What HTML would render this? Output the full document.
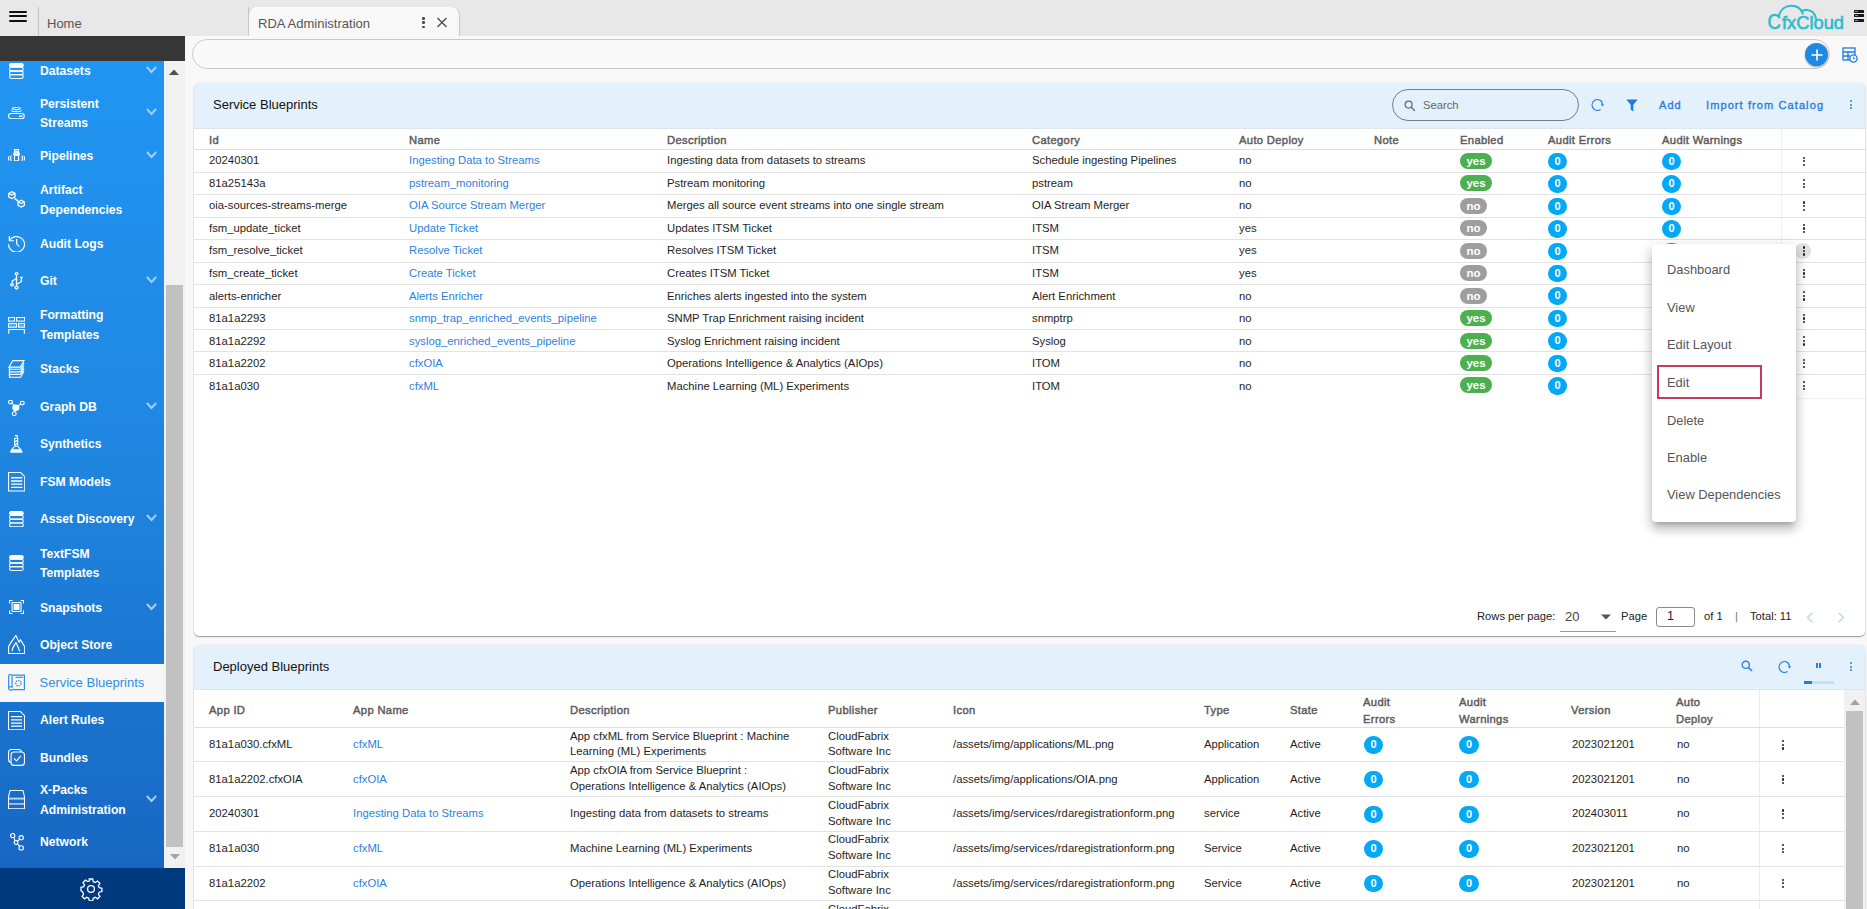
<!DOCTYPE html><html><head><meta charset="utf-8"><style>
*{box-sizing:border-box;margin:0;padding:0}
html,body{width:1867px;height:909px;overflow:hidden;background:#f8f8f8;font-family:"Liberation Sans",sans-serif;position:relative}
.abs{position:absolute}
.t{position:absolute;white-space:nowrap;line-height:1}
.top{left:0;top:0;width:1867px;height:36px;background:#e8e8e8}
.side{left:0;top:61px;width:164px;height:807px;background:linear-gradient(180deg,#2195f2 0%,#1f86e0 50%,#1767c2 100%)}
.si{position:absolute;left:0;width:164px;color:#fff;font-weight:bold;font-size:13px;}
.si .lb{position:absolute;left:39.5px;top:0.6px!important;line-height:19.2px;font-size:13.5px;transform:scaleX(0.9);transform-origin:0 0}
.si svg{position:absolute}
.chev{position:absolute;left:146px;width:12px;height:8px}
.card{position:absolute;background:#fff;border-radius:5px;box-shadow:0 1px 1.2px rgba(0,0,0,0.38),0 0 2px rgba(0,0,0,0.08)}
.ch{position:absolute;left:0;top:0;right:0;background:#e3f1fc;border-radius:5px 5px 0 0;border-bottom:1px solid #dce6ee}
.hl{position:absolute;height:1px;background:#e3e3e3}
.th{position:absolute;white-space:nowrap;line-height:1;font-size:11.2px;font-weight:normal;letter-spacing:0.35px;-webkit-text-stroke:0.45px #5c5c5c;color:#5c5c5c}
.td{position:absolute;white-space:nowrap;line-height:1;font-size:11.3px;color:#1e1e1e}
.lk{color:#2f7fe0}
.pill{position:absolute;height:16px;border-radius:8px;color:#fff;font-weight:bold;font-size:11.5px;line-height:16px;text-align:center}
.badge{position:absolute;width:19px;height:17.5px;border-radius:9px;background:#03a9f4;color:#fff;font-weight:bold;font-size:11px;line-height:17px;text-align:center}
.dots{position:absolute;width:4px;height:10px}
.dots i{position:absolute;left:0.7px;width:2.3px;height:2.3px;background:#222;border-radius:50%}
.dots i:nth-child(1){top:0}.dots i:nth-child(2){top:3.6px}.dots i:nth-child(3){top:7.2px}
.mi{position:absolute;left:1667px;font-size:12.9px;color:#555;line-height:1;white-space:nowrap}
</style></head><body>
<div class="abs top"></div>
<div class="abs" style="left:9px;top:10.5px;width:18px;height:2.2px;background:#111;border-radius:1px"></div>
<div class="abs" style="left:9px;top:15.3px;width:18px;height:2.2px;background:#111;border-radius:1px"></div>
<div class="abs" style="left:9px;top:20.1px;width:18px;height:2.2px;background:#111;border-radius:1px"></div>
<div class="abs" style="left:38px;top:7px;width:1px;height:29px;background:#c4c4c4"></div>
<div class="t" style="left:47px;top:17px;font-size:13px;color:#555">Home</div>
<div class="abs" style="left:248px;top:7px;width:1px;height:29px;background:#c4c4c4"></div>
<div class="abs" style="left:248px;top:7px;width:212px;height:29px;background:#f8f8f8;border-radius:8px 8px 0 0;border-left:1px solid #c8c8c8;border-right:1.5px solid #c4c8cc"></div>
<div class="t" style="left:258px;top:17px;font-size:13px;color:#555">RDA Administration</div>
<div class="abs" style="left:422.2px;top:17px;width:2.7px;height:2.7px;border-radius:50%;background:#4a4a4a"></div><div class="abs" style="left:422.2px;top:21.3px;width:2.7px;height:2.7px;border-radius:50%;background:#4a4a4a"></div><div class="abs" style="left:422.2px;top:25.6px;width:2.7px;height:2.7px;border-radius:50%;background:#4a4a4a"></div>
<svg class="abs" style="left:436px;top:17px" width="12" height="11" viewBox="0 0 12 11"><path d="M1.5 1 L10.5 10 M10.5 1 L1.5 10" stroke="#4a4a4a" stroke-width="1.25"/></svg>
<svg class="abs" style="left:1760px;top:0px" width="90" height="34" viewBox="0 0 90 34">
<path d="M19.2 15.4 C20.5 9.3 25.5 5.8 31.5 5.8 C37 5.8 41 9 42.8 13.6" fill="none" stroke="#2bbdcf" stroke-width="2.1" stroke-linecap="round"/>
<path d="M41.6 11.4 C44 9.4 49.5 9.2 52.8 12.2 C54.8 14.2 55.8 16.4 56 19" fill="none" stroke="#2bbdcf" stroke-width="2.1" stroke-linecap="round"/>
<text x="7.6" y="29" font-family="Liberation Sans" font-size="21.5" fill="#2bbdcf" stroke="#2bbdcf" stroke-width="0.6" textLength="13.4" lengthAdjust="spacingAndGlyphs">C</text>
<text x="22" y="29" font-family="Liberation Sans" font-size="18" fill="#2bbdcf" stroke="#2bbdcf" stroke-width="0.6" textLength="62" lengthAdjust="spacingAndGlyphs">fxCloud</text>
</svg>
<div class="abs" style="left:1854px;top:10.2px;width:9.5px;height:3px;background:#1a1a1a;border-radius:0.5px"></div>
<div class="abs" style="left:1855px;top:11.2px;width:2.5px;height:1px;background:#6b8fd6"></div>
<div class="abs" style="left:1854px;top:14.4px;width:9.5px;height:3px;background:#1a1a1a;border-radius:0.5px"></div>
<div class="abs" style="left:1855px;top:15.4px;width:2.5px;height:1px;background:#6b8fd6"></div>
<div class="abs" style="left:1854px;top:18.6px;width:9.5px;height:3px;background:#1a1a1a;border-radius:0.5px"></div>
<div class="abs" style="left:1855px;top:19.6px;width:2.5px;height:1px;background:#6b8fd6"></div>
<div class="abs" style="left:0;top:36px;width:185px;height:25px;background:#363636"></div>
<div class="abs side"></div>
<div class="abs" style="left:164px;top:61px;width:21px;height:807px;background:#f1f1f1"></div>
<div class="abs" style="left:166px;top:285px;width:17px;height:561.5px;background:#c1c1c1"></div>
<svg class="abs" style="left:169px;top:69px" width="10" height="6"><path d="M0 6 L5 0.5 L10 6Z" fill="#505050"/></svg>
<svg class="abs" style="left:169.5px;top:854px" width="10" height="6"><path d="M0 0 L5 5.5 L10 0Z" fill="#a3a3a3"/></svg>
<div class="abs" style="left:0;top:664px;width:164px;height:37.5px;background:#f7f7f7"></div>
<div class="si" style="top:60.40px;height:19.2px;color:#fff;font-weight:bold"><div class="lb" style="">Datasets</div></div>
<div class="abs" style="left:9.10px;top:62.90px;line-height:0"><svg width="14.80" height="16.00" viewBox="0.45 0.25 15.10 16.50" preserveAspectRatio="none"><g fill="none" stroke="#fff" stroke-width="1.1"><rect x="1" y="0.8" width="14" height="3.6" rx="1.8" fill="#fff"/><rect x="1" y="4.6" width="14" height="3.8" rx="1.9"/><rect x="1" y="8.6" width="14" height="3.8" rx="1.9"/><rect x="1" y="12.4" width="14" height="3.8" rx="1.9"/></g></svg></div>
<svg class="abs" style="left:146px;top:65.8px" width="11" height="8" viewBox="0 0 11 8"><path d="M0.9 1 L5.5 6 L10.1 1" fill="none" stroke="#a6d0f8" stroke-width="1.9"/></svg>
<div class="si" style="top:93.30px;height:38.4px;color:#fff;font-weight:bold"><div class="lb" style="">Persistent<br>Streams</div></div>
<div class="abs" style="left:8.00px;top:106.90px;line-height:0"><svg width="16.80" height="12.30" viewBox="0.25 0.05 17.50 13.60" preserveAspectRatio="none"><g fill="none" stroke="#fff" stroke-width="1.1"><ellipse cx="9" cy="1.8" rx="4.3" ry="1.2"/><path d="M3.8 3.6c0 1 2.3 1.6 5.2 1.6s5.2-.6 5.2-1.6"/><rect x="0.8" y="7.3" width="16.4" height="5.8" rx="2.9"/><path d="M11.8 10.2h3.4" stroke-width="1.6"/></g></svg></div>
<svg class="abs" style="left:146px;top:108.3px" width="11" height="8" viewBox="0 0 11 8"><path d="M0.9 1 L5.5 6 L10.1 1" fill="none" stroke="#a6d0f8" stroke-width="1.9"/></svg>
<div class="si" style="top:145.40px;height:19.2px;color:#fff;font-weight:bold"><div class="lb" style="">Pipelines</div></div>
<div class="abs" style="left:7.90px;top:149.10px;line-height:0"><svg width="17.10" height="12.30" viewBox="0.30 0.05 16.60 12.70" preserveAspectRatio="none"><g fill="none" stroke="#fff" stroke-width="1.1" stroke-width="1.1"><rect x="6.6" y="0.6" width="4" height="1.8"/><path d="M5.9 5.6C5.9 3.8 7 3 8.6 3S11.3 3.8 11.3 5.6Z" fill="rgba(255,255,255,0.55)"/><rect x="6.6" y="6.6" width="4" height="5.6"/><path d="M1.4 7.4C0.7 8.8 0.7 10.6 1.4 12M3.6 6.8C2.7 8.5 2.7 10.9 3.6 12.4M13.6 6.8C14.5 8.5 14.5 10.9 13.6 12.4M15.8 7.4C16.5 8.8 16.5 10.6 15.8 12"/></g></svg></div>
<svg class="abs" style="left:146px;top:150.8px" width="11" height="8" viewBox="0 0 11 8"><path d="M0.9 1 L5.5 6 L10.1 1" fill="none" stroke="#a6d0f8" stroke-width="1.9"/></svg>
<div class="si" style="top:179.80px;height:38.4px;color:#fff;font-weight:bold"><div class="lb" style="">Artifact<br>Dependencies</div></div>
<div class="abs" style="left:7.90px;top:191.00px;line-height:0"><svg width="17.10" height="16.70" viewBox="1.45 0.95 14.90 15.70" preserveAspectRatio="none"><g fill="none" stroke="#fff" stroke-width="1.1" stroke-width="1.2"><path d="M2 3.2l2.8-1.6 2.8 1.6v3.2l-2.8 1.6-2.8-1.6z"/><path d="M10.2 11.2l2.8-1.6 2.8 1.6v3.2l-2.8 1.6-2.8-1.6z"/><path d="M2.2 3.3l2.6 1.5 2.6-1.5M10.4 11.3l2.6 1.5 2.6-1.5"/><path d="M7.2 8l3 2.5" stroke-width="1.5"/></g></svg></div>
<div class="si" style="top:233.40px;height:19.2px;color:#fff;font-weight:bold"><div class="lb" style="">Audit Logs</div></div>
<div class="abs" style="left:7.90px;top:235.50px;line-height:0"><svg width="17.10" height="16.70" viewBox="1.05 1.80 16.10 16.15" preserveAspectRatio="none"><g fill="none" stroke="#fff" stroke-width="1.1" stroke-width="1.3"><path d="M2.4 6.5A7.5 7.5 0 1 1 1.6 9.8"/><path d="M2.3 1.8v4.6h4.4"/><path d="M9.2 4.8v4.6l2.6 2.6"/></g></svg></div>
<div class="si" style="top:270.90px;height:19.2px;color:#fff;font-weight:bold"><div class="lb" style="">Git</div></div>
<div class="abs" style="left:9.90px;top:272.40px;line-height:0"><svg width="13.10" height="17.40" viewBox="2.65 0.15 10.75 17.50" preserveAspectRatio="none"><g fill="none" stroke="#fff" stroke-width="1.1"><circle cx="8" cy="1.8" r="1.1"/><path d="M8 3v11.5"/><circle cx="8" cy="15.8" r="1.3"/><path d="M8 6.5L4.5 9.2v2.8"/><circle cx="4.3" cy="13" r="1.1"/><path d="M8 12.5l4-2.5V6.3"/><path d="M10.8 5.5h2.6"/></g></svg></div>
<svg class="abs" style="left:146px;top:276.3px" width="11" height="8" viewBox="0 0 11 8"><path d="M0.9 1 L5.5 6 L10.1 1" fill="none" stroke="#a6d0f8" stroke-width="1.9"/></svg>
<div class="si" style="top:304.80px;height:38.4px;color:#fff;font-weight:bold"><div class="lb" style="">Formatting<br>Templates</div></div>
<div class="abs" style="left:7.90px;top:317.00px;line-height:0"><svg width="17.10" height="16.80" viewBox="0.45 0.45 17.10 17.05" preserveAspectRatio="none"><g fill="none" stroke="#fff" stroke-width="1.1"><rect x="1" y="1" width="6" height="3.6"/><rect x="9" y="1" width="8" height="3.6"/><rect x="1" y="7" width="8" height="3.8" fill="rgba(255,255,255,0.25)"/><rect x="11" y="7" width="6" height="3.8" fill="rgba(255,255,255,0.25)"/><path d="M1.2 17.5V13.2h15.6v4.3"/></g></svg></div>
<div class="si" style="top:358.40px;height:19.2px;color:#fff;font-weight:bold"><div class="lb" style="">Stacks</div></div>
<div class="abs" style="left:8.00px;top:360.00px;line-height:0"><svg width="17.00" height="18.00" viewBox="0.00 0.65 18.00 16.65" preserveAspectRatio="none"><g fill="none" stroke="#fff" stroke-width="1.1"><path d="M5 1.2h12l-4 6H1z"/><path d="M1.8 9.2h11.6l3.6-5.6M1.8 11.6h11.6l3.6-5.6M1.8 14h11.6l3.6-5.6M1.8 16.6h11.6l3.6-5.6"/><path d="M1 7.2l1 1.5-1 1M1 9.6l1 1.5-1 1M1 12l1 1.5-1 1M1 14.4l1 1.5-1 1"/></g></svg></div>
<div class="si" style="top:396.40px;height:19.2px;color:#fff;font-weight:bold"><div class="lb" style="">Graph DB</div></div>
<div class="abs" style="left:8.10px;top:399.80px;line-height:0"><svg width="16.80" height="16.00" viewBox="0.15 0.00 15.70 15.85" preserveAspectRatio="none"><g fill="none" stroke="#fff" stroke-width="1.1" stroke-width="1.3"><circle cx="2.5" cy="2" r="1.8"/><circle cx="13.5" cy="3" r="1.8"/><circle cx="6" cy="13.5" r="1.8"/><path d="M3.8 3.3l2.5 2.2M12 4l-2 1.5M7 9.5l-.6 2.2"/></g><circle cx="7.5" cy="7.7" r="3.3" fill="#fff"/></svg></div>
<svg class="abs" style="left:146px;top:401.8px" width="11" height="8" viewBox="0 0 11 8"><path d="M0.9 1 L5.5 6 L10.1 1" fill="none" stroke="#a6d0f8" stroke-width="1.9"/></svg>
<div class="si" style="top:433.90px;height:19.2px;color:#fff;font-weight:bold"><div class="lb" style="">Synthetics</div></div>
<div class="abs" style="left:10.20px;top:435.00px;line-height:0"><svg width="12.60" height="17.70" viewBox="0.50 0.45 13.00 16.55" preserveAspectRatio="none"><g fill="none" stroke="#fff" stroke-width="1.1"><path d="M5.5 1h2.5v2M5.3 3.5h3.2v7.5H5.3z"/><path d="M5.2 7l3-1.5M5.4 10l2.8-2"/><path d="M4.8 11.5L2 14.5M9 11.5l3 3"/></g><path d="M2.2 13.8h9.6l1.6 2c.3 .4 0 1.2-.6 1.2H1.2c-.6 0-.9-.8-.6-1.2z" fill="#fff"/></svg></div>
<div class="si" style="top:471.40px;height:19.2px;color:#fff;font-weight:bold"><div class="lb" style="">FSM Models</div></div>
<div class="abs" style="left:7.90px;top:472.00px;line-height:0"><svg width="17.30" height="19.60" viewBox="0.25 0.25 17.50 19.50" preserveAspectRatio="none"><g fill="none" stroke="#fff" stroke-width="1.1" stroke-width="1.2"><path d="M0.8 0.8h12.3l4.1 4.1v14.3H0.8z"/></g><g stroke="#fff" stroke-width="1.3"><path d="M3.3 6h11.4M3.3 9.2h11.4M3.3 12.4h11.4M3.3 15.6h11.4"/></g></svg></div>
<div class="si" style="top:508.90px;height:19.2px;color:#fff;font-weight:bold"><div class="lb" style="">Asset Discovery</div></div>
<div class="abs" style="left:9.10px;top:510.50px;line-height:0"><svg width="14.80" height="16.40" viewBox="0.45 0.25 15.10 16.50" preserveAspectRatio="none"><g fill="none" stroke="#fff" stroke-width="1.1"><rect x="1" y="0.8" width="14" height="3.6" rx="1.8" fill="#fff"/><rect x="1" y="4.6" width="14" height="3.8" rx="1.9"/><rect x="1" y="8.6" width="14" height="3.8" rx="1.9"/><rect x="1" y="12.4" width="14" height="3.8" rx="1.9"/></g></svg></div>
<svg class="abs" style="left:146px;top:514.3px" width="11" height="8" viewBox="0 0 11 8"><path d="M0.9 1 L5.5 6 L10.1 1" fill="none" stroke="#a6d0f8" stroke-width="1.9"/></svg>
<div class="si" style="top:543.30px;height:38.4px;color:#fff;font-weight:bold"><div class="lb" style="">TextFSM<br>Templates</div></div>
<div class="abs" style="left:9.10px;top:554.80px;line-height:0"><svg width="14.80" height="16.00" viewBox="0.45 0.25 15.10 16.50" preserveAspectRatio="none"><g fill="none" stroke="#fff" stroke-width="1.1"><rect x="1" y="0.8" width="14" height="3.6" rx="1.8" fill="#fff"/><rect x="1" y="4.6" width="14" height="3.8" rx="1.9"/><rect x="1" y="8.6" width="14" height="3.8" rx="1.9"/><rect x="1" y="12.4" width="14" height="3.8" rx="1.9"/></g></svg></div>
<div class="si" style="top:597.40px;height:19.2px;color:#fff;font-weight:bold"><div class="lb" style="">Snapshots</div></div>
<div class="abs" style="left:8.90px;top:600.00px;line-height:0"><svg width="15.10" height="14.00" viewBox="0.45 0.45 15.10 14.10" preserveAspectRatio="none"><g fill="none" stroke="#fff" stroke-width="1.1"><path d="M1 4V1h3M12 1h3v3M15 11v3h-3M4 14H1v-3"/><rect x="3.5" y="3" width="9" height="9"/></g><rect x="5" y="4.5" width="6" height="6" fill="#fff"/></svg></div>
<svg class="abs" style="left:146px;top:602.8px" width="11" height="8" viewBox="0 0 11 8"><path d="M0.9 1 L5.5 6 L10.1 1" fill="none" stroke="#a6d0f8" stroke-width="1.9"/></svg>
<div class="si" style="top:634.90px;height:19.2px;color:#fff;font-weight:bold"><div class="lb" style="">Object Store</div></div>
<div class="abs" style="left:7.90px;top:634.80px;line-height:0"><svg width="17.30" height="19.00" viewBox="0.45 0.05 16.50 18.90" preserveAspectRatio="none"><g fill="none" stroke="#fff" stroke-width="1.1" stroke-width="1.2" stroke-linejoin="round"><path d="M1 11.6V18.4H16.4V11.6L12.3 4.7L11.1 7.2L7.9 0.6C6 3.5 3 7.5 1 11.6Z"/><path d="M4.6 16.2C4 12.5 7 10 8.1 7.4C8.8 9.6 9.6 11 10.2 12.4L11.6 16.2"/></g></svg></div>
<div class="si" style="top:672.90px;height:19.2px;color:#2d8fe6;font-weight:normal"><div class="lb" style="font-size:13px;transform:none">Service Blueprints</div></div>
<div class="abs" style="left:8.00px;top:674.00px;line-height:0"><svg width="17.00" height="16.70" viewBox="0.40 0.65 17.20 16.95" preserveAspectRatio="none"><g fill="none" stroke="#2d8fe6" stroke-width="1.2"><path d="M4.5 1.8h12.5v14.7H4.5"/><path d="M4.5 1.8C3 0.8 1 1.2 1 3v12.5c0 1 .8 1.5 1.6 1.5h1.9"/><path d="M4.5 1.8v12.2c-1-.8-2.5-.6-3.3.2"/><path d="M8 4h7.5"/><circle cx="11" cy="10" r="2.8" stroke-dasharray="1.6 0.9"/></g></svg></div>
<div class="si" style="top:709.90px;height:19.2px;color:#fff;font-weight:bold"><div class="lb" style="">Alert Rules</div></div>
<div class="abs" style="left:8.00px;top:710.50px;line-height:0"><svg width="17.00" height="19.30" viewBox="0.25 0.25 17.50 19.50" preserveAspectRatio="none"><g fill="none" stroke="#fff" stroke-width="1.1" stroke-width="1.2"><path d="M0.8 0.8h12.3l4.1 4.1v14.3H0.8z"/></g><g stroke="#fff" stroke-width="1.3"><path d="M3.3 6h11.4M3.3 9.2h11.4M3.3 12.4h11.4M3.3 15.6h11.4"/></g></svg></div>
<div class="si" style="top:747.40px;height:19.2px;color:#fff;font-weight:bold"><div class="lb" style="">Bundles</div></div>
<div class="abs" style="left:8.00px;top:749.00px;line-height:0"><svg width="17.00" height="16.90" viewBox="0.45 0.45 17.10 17.10" preserveAspectRatio="none"><g fill="none" stroke="#fff" stroke-width="1.1"><rect x="1" y="1" width="13" height="13" rx="3"/><rect x="3.5" y="3.5" width="13.5" height="13.5" rx="3" fill="#1b74d2"/><path d="M6.5 10l2.5 2.5 4.5-5"/></g></svg></div>
<div class="si" style="top:779.80px;height:38.4px;color:#fff;font-weight:bold"><div class="lb" style="">X-Packs<br>Administration</div></div>
<div class="abs" style="left:8.00px;top:789.50px;line-height:0"><svg width="17.00" height="19.30" viewBox="0.05 0.25 17.90 19.60" preserveAspectRatio="none"><g fill="none" stroke="#fff" stroke-width="1.1" stroke-width="1.2"><path d="M2.2 0.8H15.8L17.4 7V19.3H0.6V7Z"/><path d="M0.6 9h16.8" stroke-width="2" stroke="rgba(255,255,255,0.7)"/><path d="M0.6 14.4h16.8"/></g></svg></div>
<svg class="abs" style="left:146px;top:794.8px" width="11" height="8" viewBox="0 0 11 8"><path d="M0.9 1 L5.5 6 L10.1 1" fill="none" stroke="#a6d0f8" stroke-width="1.9"/></svg>
<div class="si" style="top:831.40px;height:19.2px;color:#fff;font-weight:bold"><div class="lb" style="">Network</div></div>
<div class="abs" style="left:9.60px;top:833.40px;line-height:0"><svg width="14.00" height="17.60" viewBox="0.45 0.15 13.80 17.80" preserveAspectRatio="none"><g fill="none" stroke="#fff" stroke-width="1.1" stroke-width="1.15"><circle cx="3.1" cy="2.8" r="2.1"/><circle cx="11.5" cy="4.9" r="2.1"/><circle cx="6.4" cy="9.8" r="1.9"/><circle cx="11.5" cy="15.2" r="2.2"/><path d="M4.2 4.6L5.6 8.1M10 6.3L7.8 8.6M7.7 11.3L10 13.4"/></g></svg></div>
<div class="abs" style="left:0;top:868px;width:185px;height:41px;background:#00397d"></div>
<svg class="abs" style="left:79px;top:877px" width="24" height="24" viewBox="0 0 24 24"><path fill="none" stroke="#fff" stroke-width="1.3" d="M10.3 2h3.4l.6 2.7 1.9.8 2.3-1.5 2.4 2.4-1.5 2.3.8 1.9 2.7.6v3.4l-2.7.6-.8 1.9 1.5 2.3-2.4 2.4-2.3-1.5-1.9.8-.6 2.7h-3.4l-.6-2.7-1.9-.8-2.3 1.5-2.4-2.4 1.5-2.3-.8-1.9L2 13.7v-3.4l2.7-.6.8-1.9L4 5.5 6.4 3.1l2.3 1.5 1.9-.8z"/><circle cx="12" cy="12" r="3.4" fill="none" stroke="#fff" stroke-width="1.3"/></svg>
<div class="abs" style="left:191.9px;top:39.3px;width:1638.6px;height:29.4px;border:1px solid #cacaca;border-radius:15px;background:#f9f9f9"></div>
<div class="abs" style="left:1805px;top:43px;width:23px;height:23px;border-radius:50%;background:#1e88e5;box-shadow:0 1px 2px rgba(0,0,0,0.35)"></div>
<svg class="abs" style="left:1810.5px;top:48.5px" width="12" height="12"><path d="M6 0.5v11M0.5 6h11" stroke="#fff" stroke-width="1.6"/></svg>
<svg class="abs" style="left:1842px;top:47px" width="16" height="16" viewBox="0 0 16 16"><g fill="none" stroke="#1e7be0" stroke-width="1.3"><rect x="1" y="1" width="12" height="12"/><path d="M1 5h12M1 9h7M6 5v8"/></g><circle cx="11.5" cy="11.5" r="3.6" fill="#f9f9f9" stroke="#1e7be0" stroke-width="1.3"/><path d="M11.5 9.8v1.9h1.4" stroke="#1e7be0" stroke-width="1" fill="none"/></svg>
<div class="card" style="left:194px;top:83px;width:1671px;height:553px"></div>
<div class="ch" style="left:194px;top:83px;width:1671px;height:45.5px;position:absolute"></div>
<div class="t" style="left:213px;top:98px;font-size:13px;color:#111">Service Blueprints</div>
<div class="abs" style="left:1392.3px;top:88.9px;width:186.4px;height:31.8px;border:1px solid #7a7a7a;border-radius:16px"></div>
<svg class="abs" style="left:1404px;top:99.5px" width="12" height="12" viewBox="0 0 12 12"><circle cx="4.6" cy="4.6" r="3.5" fill="none" stroke="#666" stroke-width="1.2"/><path d="M7.3 7.3L10.8 10.8" stroke="#666" stroke-width="1.3"/></svg>
<div class="t" style="left:1423px;top:100px;font-size:11.2px;color:#666">Search</div>
<svg class="abs" style="left:1591px;top:98px" width="14" height="14" viewBox="0 0 14 14"><path d="M9.6 11.4A5.4 5.4 0 1 1 10.4 3.2 L11.6 6" fill="none" stroke="#2a7de1" stroke-width="1.25"/><path d="M9.6 6.3h3.6L11.5 8.6z" fill="#2a7de1"/></svg>
<svg class="abs" style="left:1625.5px;top:98.5px" width="12" height="13" viewBox="0 0 12 13"><path d="M0.3 0.5h11.4L7.3 5.8v6.7L4.7 10.8V5.8z" fill="#1e7be0"/></svg>
<div class="t" style="left:1659px;top:99.5px;font-size:11px;color:#2a7de1;letter-spacing:1.05px;-webkit-text-stroke:0.35px #2a7de1">Add</div>
<div class="t" style="left:1706px;top:99.5px;font-size:11px;color:#2a7de1;letter-spacing:1.1px;-webkit-text-stroke:0.35px #2a7de1">Import from Catalog</div>
<div class="dots" style="left:1849.5px;top:100px"><i style="background:#2a7de1"></i><i style="background:#2a7de1"></i><i style="background:#2a7de1"></i></div>
<div class="th" style="left:209px;top:134.5px">Id</div>
<div class="th" style="left:409px;top:134.5px">Name</div>
<div class="th" style="left:667px;top:134.5px">Description</div>
<div class="th" style="left:1032px;top:134.5px">Category</div>
<div class="th" style="left:1239px;top:134.5px">Auto Deploy</div>
<div class="th" style="left:1374px;top:134.5px">Note</div>
<div class="th" style="left:1460px;top:134.5px">Enabled</div>
<div class="th" style="left:1548px;top:134.5px">Audit Errors</div>
<div class="th" style="left:1662px;top:134.5px">Audit Warnings</div>
<div class="abs" style="left:1780.5px;top:128.5px;width:1px;height:268.4px;background:#f0f0f0"></div>
<div class="hl" style="left:194px;top:149.40px;width:1671px;background:#dedede"></div>
<div class="hl" style="left:194px;top:171.85px;width:1671px"></div>
<div class="td" style="left:209px;top:155.20px">20240301</div>
<div class="td lk" style="left:409px;top:155.20px">Ingesting Data to Streams</div>
<div class="td" style="left:667px;top:155.20px">Ingesting data from datasets to streams</div>
<div class="td" style="left:1032px;top:155.20px">Schedule ingesting Pipelines</div>
<div class="td" style="left:1239px;top:155.20px">no</div>
<div class="pill" style="left:1460px;top:152.90px;width:32px;background:#4caf50">yes</div>
<div class="badge" style="left:1548px;top:152.70px">0</div>
<div class="badge" style="left:1662px;top:152.70px">0</div>
<div class="dots" style="left:1801.9px;top:156.50px"><i></i><i></i><i></i></div>
<div class="hl" style="left:194px;top:194.30px;width:1671px"></div>
<div class="td" style="left:209px;top:177.75px">81a25143a</div>
<div class="td lk" style="left:409px;top:177.75px">pstream_monitoring</div>
<div class="td" style="left:667px;top:177.75px">Pstream monitoring</div>
<div class="td" style="left:1032px;top:177.75px">pstream</div>
<div class="td" style="left:1239px;top:177.75px">no</div>
<div class="pill" style="left:1460px;top:175.35px;width:32px;background:#4caf50">yes</div>
<div class="badge" style="left:1548px;top:175.15px">0</div>
<div class="badge" style="left:1662px;top:175.15px">0</div>
<div class="dots" style="left:1801.9px;top:178.95px"><i></i><i></i><i></i></div>
<div class="hl" style="left:194px;top:216.75px;width:1671px"></div>
<div class="td" style="left:209px;top:200.30px">oia-sources-streams-merge</div>
<div class="td lk" style="left:409px;top:200.30px">OIA Source Stream Merger</div>
<div class="td" style="left:667px;top:200.30px">Merges all source event streams into one single stream</div>
<div class="td" style="left:1032px;top:200.30px">OIA Stream Merger</div>
<div class="td" style="left:1239px;top:200.30px">no</div>
<div class="pill" style="left:1460px;top:197.80px;width:27px;background:#9e9e9e">no</div>
<div class="badge" style="left:1548px;top:197.60px">0</div>
<div class="badge" style="left:1662px;top:197.60px">0</div>
<div class="dots" style="left:1801.9px;top:201.40px"><i></i><i></i><i></i></div>
<div class="hl" style="left:194px;top:239.20px;width:1671px"></div>
<div class="td" style="left:209px;top:222.85px">fsm_update_ticket</div>
<div class="td lk" style="left:409px;top:222.85px">Update Ticket</div>
<div class="td" style="left:667px;top:222.85px">Updates ITSM Ticket</div>
<div class="td" style="left:1032px;top:222.85px">ITSM</div>
<div class="td" style="left:1239px;top:222.85px">yes</div>
<div class="pill" style="left:1460px;top:220.25px;width:27px;background:#9e9e9e">no</div>
<div class="badge" style="left:1548px;top:220.05px">0</div>
<div class="badge" style="left:1662px;top:220.05px">0</div>
<div class="dots" style="left:1801.9px;top:223.85px"><i></i><i></i><i></i></div>
<div class="hl" style="left:194px;top:261.65px;width:1671px"></div>
<div class="td" style="left:209px;top:245.40px">fsm_resolve_ticket</div>
<div class="td lk" style="left:409px;top:245.40px">Resolve Ticket</div>
<div class="td" style="left:667px;top:245.40px">Resolves ITSM Ticket</div>
<div class="td" style="left:1032px;top:245.40px">ITSM</div>
<div class="td" style="left:1239px;top:245.40px">yes</div>
<div class="pill" style="left:1460px;top:242.70px;width:27px;background:#9e9e9e">no</div>
<div class="badge" style="left:1548px;top:242.50px">0</div>
<div class="badge" style="left:1662px;top:242.50px"></div>
<div class="abs" style="left:1795px;top:242.90px;width:16px;height:16px;border-radius:50%;background:#e2e2e2"></div>
<div class="dots" style="left:1801.9px;top:246.30px"><i></i><i></i><i></i></div>
<div class="hl" style="left:194px;top:284.10px;width:1671px"></div>
<div class="td" style="left:209px;top:267.95px">fsm_create_ticket</div>
<div class="td lk" style="left:409px;top:267.95px">Create Ticket</div>
<div class="td" style="left:667px;top:267.95px">Creates ITSM Ticket</div>
<div class="td" style="left:1032px;top:267.95px">ITSM</div>
<div class="td" style="left:1239px;top:267.95px">yes</div>
<div class="pill" style="left:1460px;top:265.15px;width:27px;background:#9e9e9e">no</div>
<div class="badge" style="left:1548px;top:264.95px">0</div>
<div class="badge" style="left:1662px;top:264.95px">0</div>
<div class="dots" style="left:1801.9px;top:268.75px"><i></i><i></i><i></i></div>
<div class="hl" style="left:194px;top:306.55px;width:1671px"></div>
<div class="td" style="left:209px;top:290.50px">alerts-enricher</div>
<div class="td lk" style="left:409px;top:290.50px">Alerts Enricher</div>
<div class="td" style="left:667px;top:290.50px">Enriches alerts ingested into the system</div>
<div class="td" style="left:1032px;top:290.50px">Alert Enrichment</div>
<div class="td" style="left:1239px;top:290.50px">no</div>
<div class="pill" style="left:1460px;top:287.60px;width:27px;background:#9e9e9e">no</div>
<div class="badge" style="left:1548px;top:287.40px">0</div>
<div class="badge" style="left:1662px;top:287.40px">0</div>
<div class="dots" style="left:1801.9px;top:291.20px"><i></i><i></i><i></i></div>
<div class="hl" style="left:194px;top:329.00px;width:1671px"></div>
<div class="td" style="left:209px;top:313.05px">81a1a2293</div>
<div class="td lk" style="left:409px;top:313.05px">snmp_trap_enriched_events_pipeline</div>
<div class="td" style="left:667px;top:313.05px">SNMP Trap Enrichment raising incident</div>
<div class="td" style="left:1032px;top:313.05px">snmptrp</div>
<div class="td" style="left:1239px;top:313.05px">no</div>
<div class="pill" style="left:1460px;top:310.05px;width:32px;background:#4caf50">yes</div>
<div class="badge" style="left:1548px;top:309.85px">0</div>
<div class="badge" style="left:1662px;top:309.85px">0</div>
<div class="dots" style="left:1801.9px;top:313.65px"><i></i><i></i><i></i></div>
<div class="hl" style="left:194px;top:351.45px;width:1671px"></div>
<div class="td" style="left:209px;top:335.60px">81a1a2292</div>
<div class="td lk" style="left:409px;top:335.60px">syslog_enriched_events_pipeline</div>
<div class="td" style="left:667px;top:335.60px">Syslog Enrichment raising incident</div>
<div class="td" style="left:1032px;top:335.60px">Syslog</div>
<div class="td" style="left:1239px;top:335.60px">no</div>
<div class="pill" style="left:1460px;top:332.50px;width:32px;background:#4caf50">yes</div>
<div class="badge" style="left:1548px;top:332.30px">0</div>
<div class="badge" style="left:1662px;top:332.30px">0</div>
<div class="dots" style="left:1801.9px;top:336.10px"><i></i><i></i><i></i></div>
<div class="hl" style="left:194px;top:373.90px;width:1671px"></div>
<div class="td" style="left:209px;top:358.15px">81a1a2202</div>
<div class="td lk" style="left:409px;top:358.15px">cfxOIA</div>
<div class="td" style="left:667px;top:358.15px">Operations Intelligence &amp; Analytics (AIOps)</div>
<div class="td" style="left:1032px;top:358.15px">ITOM</div>
<div class="td" style="left:1239px;top:358.15px">no</div>
<div class="pill" style="left:1460px;top:354.95px;width:32px;background:#4caf50">yes</div>
<div class="badge" style="left:1548px;top:354.75px">0</div>
<div class="badge" style="left:1662px;top:354.75px">0</div>
<div class="dots" style="left:1801.9px;top:358.55px"><i></i><i></i><i></i></div>
<div class="hl" style="left:1781px;top:397.85px;width:84px;background:#f0f0f0"></div>
<div class="td" style="left:209px;top:380.70px">81a1a030</div>
<div class="td lk" style="left:409px;top:380.70px">cfxML</div>
<div class="td" style="left:667px;top:380.70px">Machine Learning (ML) Experiments</div>
<div class="td" style="left:1032px;top:380.70px">ITOM</div>
<div class="td" style="left:1239px;top:380.70px">no</div>
<div class="pill" style="left:1460px;top:377.40px;width:32px;background:#4caf50">yes</div>
<div class="badge" style="left:1548px;top:377.20px">0</div>
<div class="badge" style="left:1662px;top:377.20px">0</div>
<div class="dots" style="left:1801.9px;top:381.00px"><i></i><i></i><i></i></div>
<div class="t" style="left:1477px;top:611px;font-size:11.2px;color:#222">Rows per page:</div>
<div class="t" style="left:1565px;top:610px;font-size:13px;color:#444">20</div>
<div class="abs" style="left:1560px;top:631px;width:56px;height:1px;background:#9a9a9a"></div>
<svg class="abs" style="left:1601px;top:614px" width="10" height="6"><path d="M0 0.5h10L5 5.5z" fill="#555"/></svg>
<div class="t" style="left:1621px;top:611px;font-size:11.2px;color:#222">Page</div>
<div class="abs" style="left:1656px;top:607px;width:39px;height:19.5px;border:1px solid #8a8a8a;border-radius:3px;background:#fff"></div>
<div class="t" style="left:1667px;top:610px;font-size:12.5px;color:#222">1</div>
<div class="t" style="left:1704px;top:611px;font-size:11.2px;color:#222">of 1</div>
<div class="t" style="left:1735px;top:611px;font-size:11.2px;color:#777">|</div>
<div class="t" style="left:1750px;top:611px;font-size:11.2px;color:#222">Total: 11</div>
<svg class="abs" style="left:1806px;top:612px" width="8" height="11"><path d="M6.5 0.8L1.5 5.5 6.5 10.2" fill="none" stroke="#b9d6f6" stroke-width="1.4"/></svg>
<svg class="abs" style="left:1837px;top:612px" width="8" height="11"><path d="M1.5 0.8L6.5 5.5 1.5 10.2" fill="none" stroke="#b9d6f6" stroke-width="1.4"/></svg>
<div class="abs" style="left:1652px;top:244px;width:144px;height:278px;background:#fff;border-radius:4px;box-shadow:0 5px 5px -3px rgba(0,0,0,.2),0 8px 10px 1px rgba(0,0,0,.14),0 3px 14px 2px rgba(0,0,0,.12)"></div>
<div class="mi" style="top:263.5px">Dashboard</div>
<div class="mi" style="top:302.3px">View</div>
<div class="mi" style="top:339.4px">Edit Layout</div>
<div class="mi" style="top:377.0px">Edit</div>
<div class="mi" style="top:414.5px">Delete</div>
<div class="mi" style="top:452.1px">Enable</div>
<div class="mi" style="top:489.4px">View Dependencies</div>
<div class="abs" style="left:1657.2px;top:365px;width:104.4px;height:34.4px;border:2px solid #c9395b"></div>
<div class="card" style="left:194px;top:644.7px;width:1671px;height:300px"></div>
<div class="ch" style="left:194px;top:644.7px;width:1671px;height:45.5px;position:absolute"></div>
<div class="t" style="left:213px;top:660px;font-size:13px;color:#111">Deployed Blueprints</div>
<svg class="abs" style="left:1741px;top:660px" width="12" height="12" viewBox="0 0 12 12"><circle cx="4.8" cy="4.8" r="3.6" fill="none" stroke="#2a7de1" stroke-width="1.4"/><path d="M7.5 7.5L11 11" stroke="#2a7de1" stroke-width="1.6"/></svg>
<svg class="abs" style="left:1777.5px;top:660px" width="14" height="14" viewBox="0 0 14 14"><path d="M9.6 11.4A5.4 5.4 0 1 1 10.4 3.2 L11.6 6" fill="none" stroke="#2a7de1" stroke-width="1.25"/><path d="M9.6 6.3h3.6L11.5 8.6z" fill="#2a7de1"/></svg>
<div class="abs" style="left:1816px;top:663px;width:1.5px;height:5px;background:#2a7de1"></div><div class="abs" style="left:1819px;top:663px;width:1.5px;height:5px;background:#2a7de1"></div>
<div class="dots" style="left:1849.5px;top:662px"><i style="background:#2a7de1"></i><i style="background:#2a7de1"></i><i style="background:#2a7de1"></i></div>
<div class="abs" style="left:1804px;top:681px;width:30px;height:3px;background:#c4e0f8"></div><div class="abs" style="left:1804px;top:681px;width:8px;height:3px;background:#1e7be0"></div>
<div class="th" style="left:209px;top:705px">App ID</div>
<div class="th" style="left:353px;top:705px">App Name</div>
<div class="th" style="left:570px;top:705px">Description</div>
<div class="th" style="left:828px;top:705px">Publisher</div>
<div class="th" style="left:953px;top:705px">Icon</div>
<div class="th" style="left:1204px;top:705px">Type</div>
<div class="th" style="left:1290px;top:705px">State</div>
<div class="th" style="left:1363px;top:693.8px;line-height:17px;white-space:nowrap">Audit<br>Errors</div>
<div class="th" style="left:1459px;top:693.8px;line-height:17px;white-space:nowrap">Audit<br>Warnings</div>
<div class="th" style="left:1571px;top:705px">Version</div>
<div class="th" style="left:1676px;top:693.8px;line-height:17px;white-space:nowrap">Auto<br>Deploy</div>
<div class="abs" style="left:1759.2px;top:690.2px;width:1px;height:219px;background:#ececec"></div>
<div class="hl" style="left:194px;top:727.00px;width:1650px;background:#dedede"></div>
<div class="hl" style="left:194px;top:761px;width:1650px"></div>
<div class="td" style="left:209px;top:739.20px">81a1a030.cfxML</div>
<div class="td lk" style="left:353px;top:739.20px">cfxML</div>
<div class="td" style="left:570px;top:728.60px;line-height:15.8px">App cfxML from Service Blueprint : Machine<br>Learning (ML) Experiments</div>
<div class="td" style="left:828px;top:728.60px;line-height:15.8px">CloudFabrix<br>Software Inc</div>
<div class="td" style="left:953px;top:739.20px">/assets/img/applications/ML.png</div>
<div class="td" style="left:1204px;top:739.20px">Application</div>
<div class="td" style="left:1290px;top:739.20px">Active</div>
<div class="badge" style="left:1364px;top:736.30px">0</div>
<div class="badge" style="left:1459px;top:736.30px;width:20px">0</div>
<div class="td" style="left:1572px;top:739.20px">2023021201</div>
<div class="td" style="left:1677px;top:739.20px">no</div>
<div class="dots" style="left:1781.2px;top:740.20px"><i></i><i></i><i></i></div>
<div class="hl" style="left:194px;top:796px;width:1650px"></div>
<div class="td" style="left:209px;top:773.80px">81a1a2202.cfxOIA</div>
<div class="td lk" style="left:353px;top:773.80px">cfxOIA</div>
<div class="td" style="left:570px;top:763.20px;line-height:15.8px">App cfxOIA from Service Blueprint :<br>Operations Intelligence &amp; Analytics (AIOps)</div>
<div class="td" style="left:828px;top:763.20px;line-height:15.8px">CloudFabrix<br>Software Inc</div>
<div class="td" style="left:953px;top:773.80px">/assets/img/applications/OIA.png</div>
<div class="td" style="left:1204px;top:773.80px">Application</div>
<div class="td" style="left:1290px;top:773.80px">Active</div>
<div class="badge" style="left:1364px;top:770.90px">0</div>
<div class="badge" style="left:1459px;top:770.90px;width:20px">0</div>
<div class="td" style="left:1572px;top:773.80px">2023021201</div>
<div class="td" style="left:1677px;top:773.80px">no</div>
<div class="dots" style="left:1781.2px;top:774.80px"><i></i><i></i><i></i></div>
<div class="hl" style="left:194px;top:831px;width:1650px"></div>
<div class="td" style="left:209px;top:808.40px">20240301</div>
<div class="td lk" style="left:353px;top:808.40px">Ingesting Data to Streams</div>
<div class="td" style="left:570px;top:808.40px">Ingesting data from datasets to streams</div>
<div class="td" style="left:828px;top:797.80px;line-height:15.8px">CloudFabrix<br>Software Inc</div>
<div class="td" style="left:953px;top:808.40px">/assets/img/services/rdaregistrationform.png</div>
<div class="td" style="left:1204px;top:808.40px">service</div>
<div class="td" style="left:1290px;top:808.40px">Active</div>
<div class="badge" style="left:1364px;top:805.50px">0</div>
<div class="badge" style="left:1459px;top:805.50px;width:20px">0</div>
<div class="td" style="left:1572px;top:808.40px">202403011</div>
<div class="td" style="left:1677px;top:808.40px">no</div>
<div class="dots" style="left:1781.2px;top:809.40px"><i></i><i></i><i></i></div>
<div class="hl" style="left:194px;top:866px;width:1650px"></div>
<div class="td" style="left:209px;top:843.00px">81a1a030</div>
<div class="td lk" style="left:353px;top:843.00px">cfxML</div>
<div class="td" style="left:570px;top:843.00px">Machine Learning (ML) Experiments</div>
<div class="td" style="left:828px;top:832.40px;line-height:15.8px">CloudFabrix<br>Software Inc</div>
<div class="td" style="left:953px;top:843.00px">/assets/img/services/rdaregistrationform.png</div>
<div class="td" style="left:1204px;top:843.00px">Service</div>
<div class="td" style="left:1290px;top:843.00px">Active</div>
<div class="badge" style="left:1364px;top:840.10px">0</div>
<div class="badge" style="left:1459px;top:840.10px;width:20px">0</div>
<div class="td" style="left:1572px;top:843.00px">2023021201</div>
<div class="td" style="left:1677px;top:843.00px">no</div>
<div class="dots" style="left:1781.2px;top:844.00px"><i></i><i></i><i></i></div>
<div class="hl" style="left:194px;top:900px;width:1650px"></div>
<div class="td" style="left:209px;top:877.60px">81a1a2202</div>
<div class="td lk" style="left:353px;top:877.60px">cfxOIA</div>
<div class="td" style="left:570px;top:877.60px">Operations Intelligence &amp; Analytics (AIOps)</div>
<div class="td" style="left:828px;top:867.00px;line-height:15.8px">CloudFabrix<br>Software Inc</div>
<div class="td" style="left:953px;top:877.60px">/assets/img/services/rdaregistrationform.png</div>
<div class="td" style="left:1204px;top:877.60px">Service</div>
<div class="td" style="left:1290px;top:877.60px">Active</div>
<div class="badge" style="left:1364px;top:874.70px">0</div>
<div class="badge" style="left:1459px;top:874.70px;width:20px">0</div>
<div class="td" style="left:1572px;top:877.60px">2023021201</div>
<div class="td" style="left:1677px;top:877.60px">no</div>
<div class="dots" style="left:1781.2px;top:878.60px"><i></i><i></i><i></i></div>
<div class="hl" style="left:194px;top:935px;width:1650px"></div>
<div class="td" style="left:828px;top:903.50px">CloudFabrix</div>
<div class="abs" style="left:1844.4px;top:690.2px;width:20.6px;height:219px;background:#f1f1f1"></div>
<div class="abs" style="left:1846px;top:711px;width:17px;height:200px;background:#c1c1c1"></div>
<svg class="abs" style="left:1850px;top:699px" width="10" height="6"><path d="M0 6 L5 0.5 L10 6Z" fill="#a3a3a3"/></svg>
</body></html>
